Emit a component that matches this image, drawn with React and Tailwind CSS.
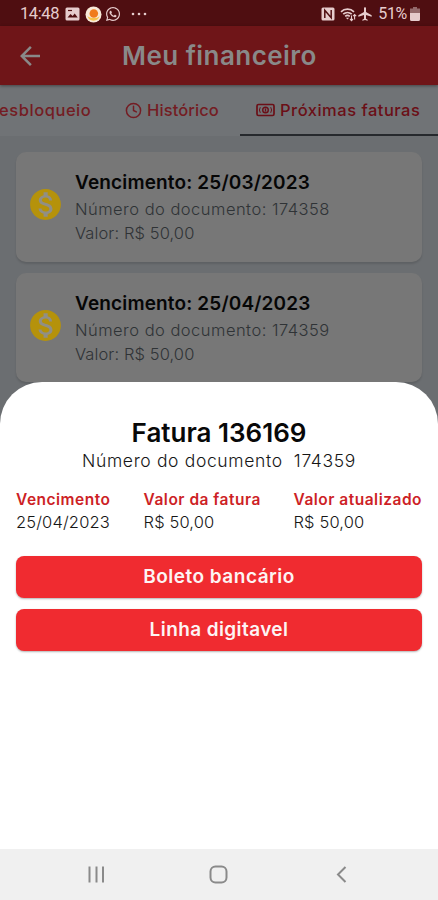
import React from "react";
import { Clock } from "lucide-react";
import { FaWhatsapp } from "react-icons/fa";
import { MdMonetizationOn, MdAirplanemodeActive, MdArrowBack } from "react-icons/md";

const invoices = [
  { id: "174358", due: "25/03/2023", value: "R$ 50,00" },
  { id: "174359", due: "25/04/2023", value: "R$ 50,00" },
];

function CashIcon() {
  return (
    <svg width="19" height="14" viewBox="0 0 19 14" fill="none" stroke="currentColor" className="shrink-0">
      <rect x="1" y="1.5" width="17" height="11" rx="1.5" strokeWidth="1.7" />
      <path d="M4.300 4.200L3.400 7l.9 2.800M14.700 4.200l.9 2.800-.9 2.800" strokeWidth="1" />
      <circle cx="9.5" cy="7" r="2.8" strokeWidth="1.4" />
      <path d="M9.5 5.4v3.2" strokeWidth="1.3" />
    </svg>
  );
}

function StatusBar() {
  return (
    <div className="flex h-[26px] items-center bg-[#4f0e11] pl-5 pr-[18px] pt-0.5 text-[#e6cccd]">
      <span className="w-[45px] font-[Roboto] text-[16.5px] leading-none tracking-[-0.4px]">14:48</span>
      <svg width="15" height="14" viewBox="0 0 15 14" className="mr-[2px]">
        <rect x="0.5" y="0.5" width="14" height="13" rx="1.5" fill="currentColor" />
        <path d="M2.5 10.5l3-3.500 2.200 2 2-2.500 3 4z" fill="#4f0e11" />
        <path d="M3 3.500h4" stroke="#4f0e11" strokeWidth="1.2" />
      </svg>
      <svg width="17" height="17" viewBox="0 0 17 17" className="ml-[3px]">
        <circle cx="8.5" cy="8.5" r="8" fill="#f8ead8" />
        <path d="M2.5 10a6.2 6.2 0 0 0 12 0c-1 2.500-9 3-12 0z" fill="#f6c34c" />
        <circle cx="8.8" cy="7.5" r="4.3" fill="#f07c1c" />
      </svg>
      <FaWhatsapp size={16} className="ml-[3px]" />
      <svg width="16" height="4" viewBox="0 0 16 4" fill="currentColor" className="ml-[10px]">
        <circle cx="2" cy="2" r="1.3" />
        <circle cx="8" cy="2" r="1.3" />
        <circle cx="14" cy="2" r="1.3" />
      </svg>
      <svg width="14" height="14" viewBox="0 0 14 14" fill="none" className="ml-auto">
        <rect x="0.5" y="0.5" width="13" height="13" rx="1.5" fill="currentColor" />
        <path d="M3.800 11V3.200l6.400 7.600V3" stroke="#4f0e11" strokeWidth="1.5" />
      </svg>
      <svg width="17" height="15" viewBox="0 0 17 15" fill="none" stroke="currentColor" className="ml-[5px]">
        <path d="M1 4.800C4.500 1.300 10.500 1.300 14 4.800" strokeWidth="1.7" />
        <path d="M3.200 7.200c2.500-2.300 6-2.300 8.500 0" strokeWidth="1.7" />
        <path d="M5.200 9.300c1.400-1.200 3.200-1.200 4.600 0" strokeWidth="1.7" />
        <path d="M7.500 12.500l-1.600-1.700h3.200z" fill="currentColor" stroke="none" />
        <path d="M11.500 8.500v5M10 12l1.500 1.600L13 12M14.600 12.500V7.500M13.100 9.100l1.500-1.600 1.600 1.600" strokeWidth="1.1" />
      </svg>
      <MdAirplanemodeActive size={16} />
      <span className="ml-[5px] font-[Roboto] text-[16px] leading-none tracking-[-0.3px]">51%</span>
      <svg width="10" height="14" viewBox="0 0 10 14" className="ml-[3px]">
        <path d="M3 0h4v1.500H10V6H0V1.500h3z" fill="#94696b" />
        <path d="M0 6h10v6.500a1.500 1.500 0 0 1-1.500 1.500h-7A1.500 1.500 0 0 1 0 12.500z" fill="currentColor" />
      </svg>
    </div>
  );
}

function Tabs() {
  return (
    <div className="flex h-[51px] overflow-hidden whitespace-nowrap bg-[#707376] text-[16.5px] font-medium text-[#741c23]">
      <div className="flex h-[50px] w-[108px] shrink-0 items-center">
        <span className="-ml-px tracking-[0.55px]">esbloqueio</span>
      </div>
      <div className="flex h-[50px] w-[132px] shrink-0 items-center pl-[17px]">
        <Clock size={17} strokeWidth={2.1} />
        <span className="ml-[5px] tracking-[0.1px]">Histórico</span>
      </div>
      <div className="flex h-[51px] w-[198px] shrink-0 items-center border-b-2 border-[#26292d] pl-4 text-[#6b0f17]">
        <CashIcon />
        <span className="ml-[5px] mt-px tracking-[0.5px]">Próximas faturas</span>
      </div>
    </div>
  );
}

function InvoiceCard({ invoice }) {
  return (
    <div className="flex h-[110px] items-center rounded-[10px] bg-[#777777] pl-[11px] shadow-[0_2px_2px_rgba(0,0,0,0.12)]">
      <div className="mb-[4px] rounded-full bg-[radial-gradient(circle,#918f85_0_13px,transparent_14px)]">
        <MdMonetizationOn size={37} className="text-[#b5920b]" />
      </div>
      <div className="ml-[11px] mt-px whitespace-nowrap text-[16.5px] font-light text-[#2f3336]">
        <p className="text-[19px] leading-[28px] font-semibold tracking-[0.15px] text-[#060606]">Vencimento: {invoice.due}</p>
        <p className="leading-[24px] tracking-[0.48px]">Número do documento: {invoice.id}</p>
        <p className="leading-[24px] tracking-[0.1px]">Valor: {invoice.value}</p>
      </div>
    </div>
  );
}

function Detail({ label, value, className }) {
  return (
    <div className={className}>
      <p className="text-[15.5px] leading-[23px] font-semibold tracking-[0.5px] text-[#cd1f26]">{label}</p>
      <p className="text-[16.5px] leading-[23px] font-light tracking-[0.15px] text-[#161616]">{value}</p>
    </div>
  );
}

function InvoiceSheet() {
  return (
    <div className="relative flex h-[467px] flex-col rounded-t-[42px] bg-white px-4 pt-[34px]">
      <h2 className="text-center text-[26px] leading-[34px] font-semibold text-[#080808]">Fatura 136169</h2>
      <p className="whitespace-pre text-center text-[17.5px] leading-[22px] font-light tracking-[0.65px] text-[#161616]">
        {"Número do documento  174359"}
      </p>
      <div className="mt-[16px] flex whitespace-nowrap">
        <Detail label="Vencimento" value="25/04/2023" className="w-[128px]" />
        <Detail label="Valor da fatura" value="R$ 50,00" className="w-[150.5px]" />
        <Detail label="Valor atualizado" value="R$ 50,00" />
      </div>
      <div className="mt-[22px] flex flex-col gap-[11px]">
        <button className="h-[42px] rounded-lg bg-[#f02b30] pt-px text-[19px] font-semibold tracking-[0.5px] text-[#fdf4f4] shadow-[0_1px_2px_rgba(0,0,0,0.3)]">
          Boleto bancário
        </button>
        <button className="h-[42px] rounded-lg bg-[#f02b30] pt-px text-[19px] font-semibold tracking-[0.4px] text-[#fdf4f4] shadow-[0_1px_2px_rgba(0,0,0,0.3)]">
          Linha digitavel
        </button>
      </div>
    </div>
  );
}

function NavBar() {
  return (
    <div className="flex h-[51px] items-center bg-[#f0f0f0] text-[#8a8a8a]">
      <svg width="17" height="17" viewBox="0 0 17 17" fill="none" stroke="currentColor" strokeWidth="2" className="ml-[88px]">
        <path d="M1.500 0.500v16M8.500 0.500v16M15 0.500v16" />
      </svg>
      <svg width="19" height="19" viewBox="0 0 19 19" fill="none" stroke="currentColor" strokeWidth="2" className="ml-[104px]">
        <rect x="1.5" y="1.5" width="16" height="16" rx="5" />
      </svg>
      <svg width="11" height="17" viewBox="0 0 11 17" fill="none" stroke="currentColor" strokeWidth="2" className="ml-[108px]">
        <path d="M9.500 1L2 8.500 9.500 16" />
      </svg>
    </div>
  );
}

export default function App() {
  return (
    <div className="flex h-[900px] w-[438px] flex-col overflow-hidden bg-[#6b6e71] font-['Inter',sans-serif]">
      <StatusBar />
      <header className="relative z-10 flex h-[59px] shrink-0 items-center bg-[#6f1518] pt-px text-[#898989] shadow-[0_1px_3px_rgba(0,0,0,0.4)]">
        <MdArrowBack size={30} className="ml-[15px]" />
        <h1 className="ml-[77px] text-[26px] leading-none font-semibold tracking-[0.45px]">Meu financeiro</h1>
      </header>
      <Tabs />
      <div className="flex h-[246px] shrink-0 flex-col gap-[11px] px-4 pt-4">
        {invoices.map((invoice) => (
          <InvoiceCard key={invoice.id} invoice={invoice} />
        ))}
      </div>
      <InvoiceSheet />
      <NavBar />
    </div>
  );
}
